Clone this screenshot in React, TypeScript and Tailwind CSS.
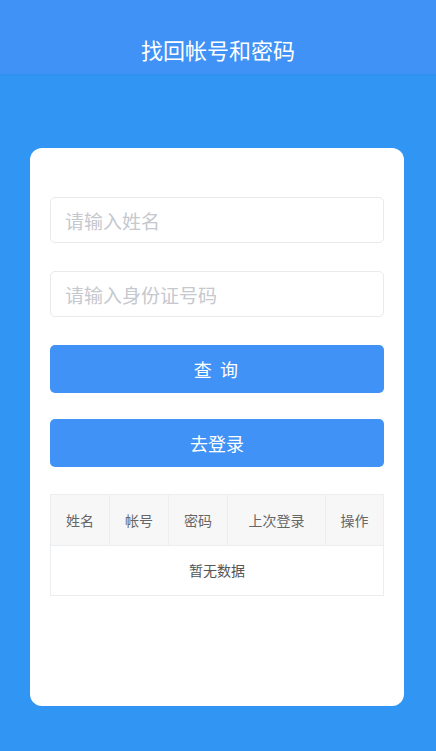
const columns = [
  { label: "姓名", width: "w-[59px]" },
  { label: "帐号", width: "w-[59px]" },
  { label: "密码", width: "w-[59px]" },
  { label: "上次登录", width: "w-[98px]" },
  { label: "操作", width: "flex-1" },
];

export default function App() {
  return (
    <div
      className="flex min-h-[751px] w-full flex-col bg-[#3196f3]"
      style={{ fontFamily: '"Noto Sans CJK SC", "Noto Sans", sans-serif' }}
    >
      <header className="flex h-[74px] items-start justify-center bg-[#4192f6] pt-[34px] shadow-[0_1px_2px_rgba(0,0,0,0.06)]">
        <h1 className="text-[22px] leading-[30px] font-normal text-white">找回帐号和密码</h1>
      </header>

      <main className="ml-[30px] mt-[74px] h-[558px] w-[374px] rounded-[12px] bg-white px-[20px] pt-[49px]">
        <div className="space-y-[28px]">
          <input
            placeholder="请输入姓名"
            className="block h-[46px] w-full rounded-[5px] border border-[#e8eaee] px-[14px] text-[19px] text-[#333] outline-none placeholder:text-[#c5c8ce]"
          />
          <input
            placeholder="请输入身份证号码"
            className="block h-[46px] w-full rounded-[5px] border border-[#e8eaee] px-[14px] text-[19px] text-[#333] outline-none placeholder:text-[#c5c8ce]"
          />
        </div>

        <button className="mt-[28px] flex h-[48px] w-full items-center justify-center rounded-[5px] bg-[#4192f6] text-[18px] tracking-[0.12em] text-white">
          查 询
        </button>
        <button className="mt-[26px] flex h-[48px] w-full items-center justify-center rounded-[5px] bg-[#4192f6] text-[18px] text-white">
          去登录
        </button>

        <div className="mt-[27px] border border-[#ebeef1]">
          <div className="flex h-[50px] bg-[#f7f7f8]">
            {columns.map((col, i) => (
              <div
                key={col.label}
                className={`${col.width} flex items-center justify-center text-[14px] text-[#666] ${i < columns.length - 1 ? "border-r border-[#ebeef1]" : ""}`}
              >
                {col.label}
              </div>
            ))}
          </div>
          <div className="flex h-[50px] items-center justify-center border-t border-[#ebeef1] text-[14px] text-[#555]">
            暂无数据
          </div>
        </div>
      </main>
    </div>
  );
}
